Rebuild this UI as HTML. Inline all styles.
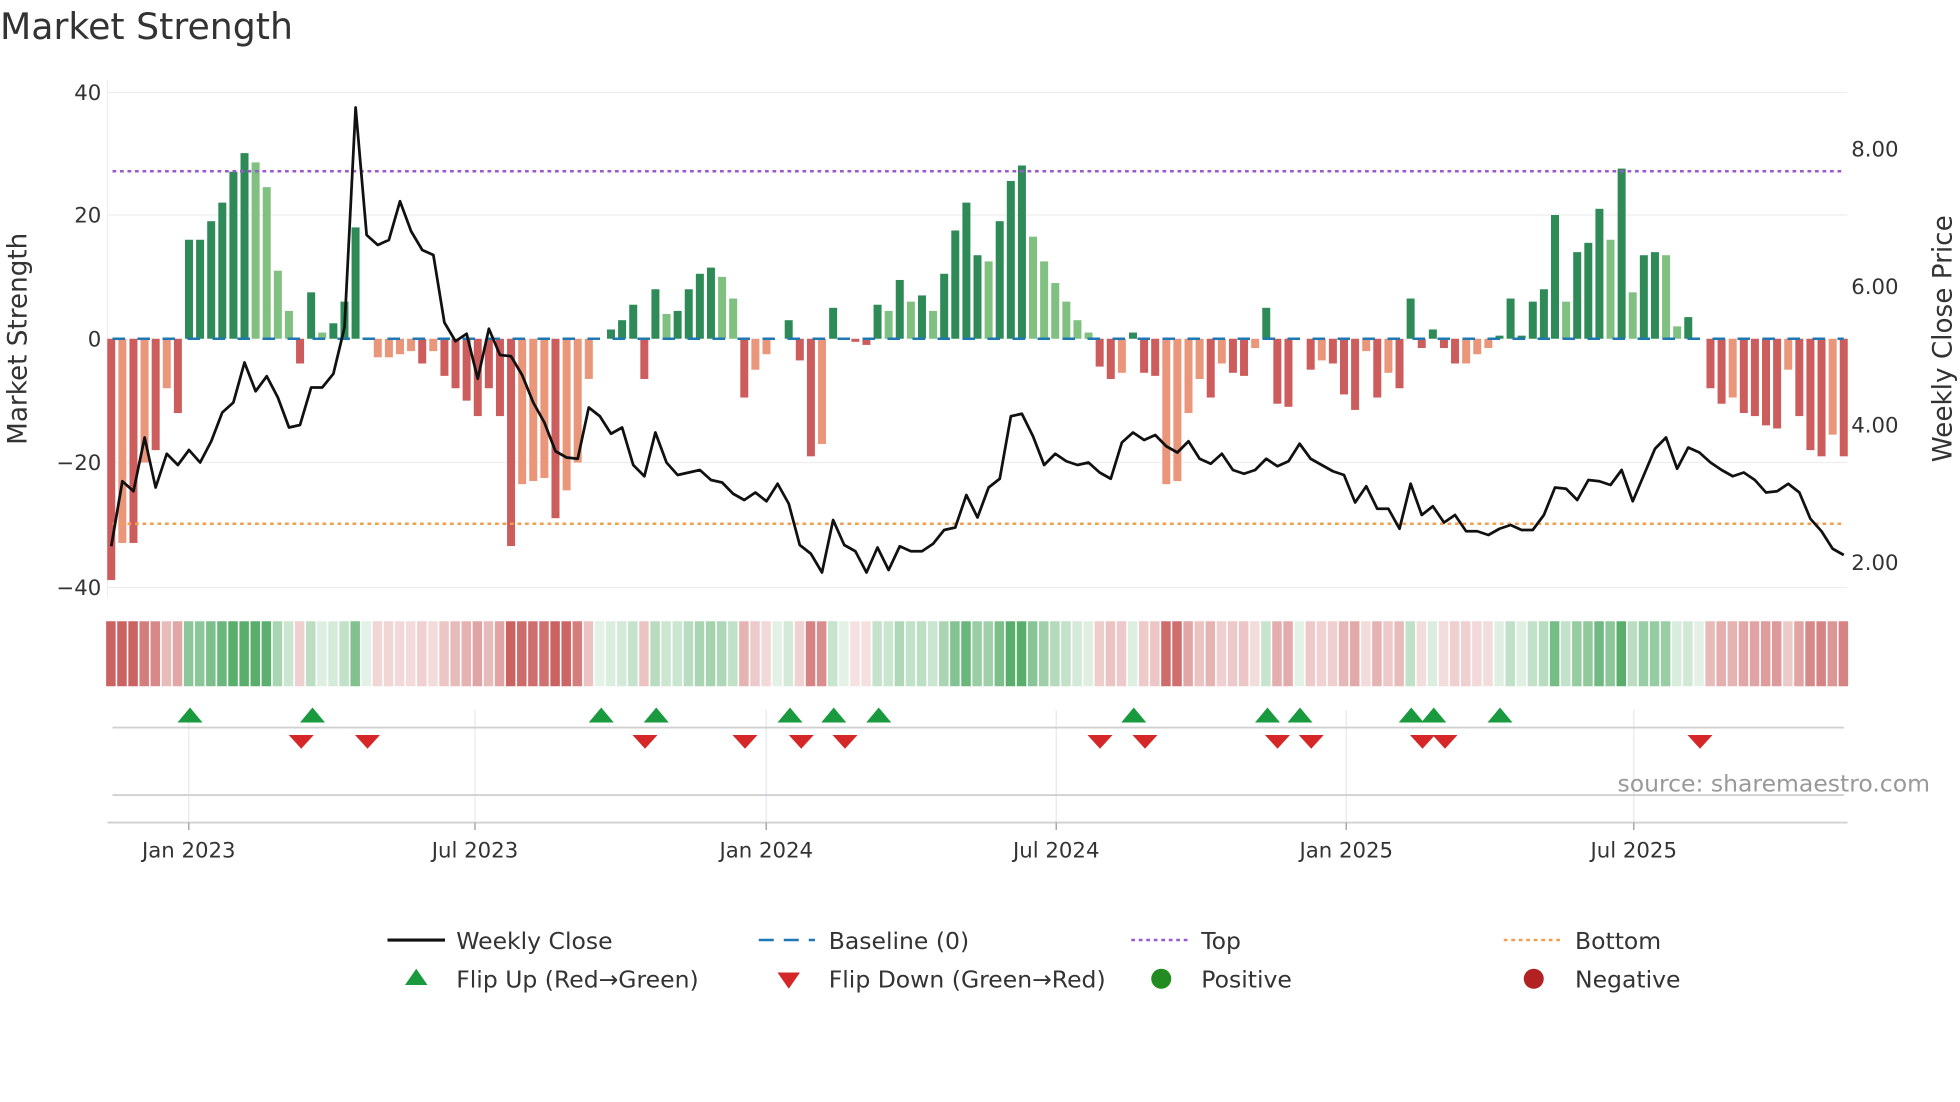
<!DOCTYPE html>
<html><head><meta charset="utf-8"><style>
html,body{margin:0;padding:0;background:#fff;width:1960px;height:1102px;overflow:hidden}
svg{display:block}
text{font-family:"DejaVu Sans","Liberation Sans",sans-serif;fill:#333}
</style></head><body>
<svg id="s" width="1960" height="1102" viewBox="0 0 1568 881.6" preserveAspectRatio="none" xmlns="http://www.w3.org/2000/svg">
<text x="0" y="31" font-size="29" fill="#333">Market Strength</text>
<g stroke="#eeeeee" stroke-width="1">
<line x1="86" y1="74" x2="1478" y2="74"/><line x1="86" y1="172" x2="1478" y2="172"/>
<line x1="86" y1="370" x2="1478" y2="370"/><line x1="86" y1="470" x2="1478" y2="470"/>
</g>
<line x1="86" y1="64" x2="86" y2="478" stroke="#eee"/>
<g font-size="17" text-anchor="end">
<text x="81" y="80">40</text><text x="81" y="178">20</text><text x="81" y="277">0</text>
<text x="81" y="376">−20</text><text x="81" y="476">−40</text>
</g>
<g font-size="17">
<text x="1481" y="125">8.00</text><text x="1481" y="235">6.00</text>
<text x="1481" y="346">4.00</text><text x="1481" y="456">2.00</text>
</g>
<text transform="translate(21,271) rotate(-90)" font-size="21" text-anchor="middle">Market Strength</text>
<text transform="translate(1561,271) rotate(-90)" font-size="21" text-anchor="middle">Weekly Close Price</text>
<g id="bars"></g>
<line x1="90" y1="271" x2="1475" y2="271" stroke="#1f77b4" stroke-width="2" stroke-dasharray="10,10"/>
<line x1="90" y1="137" x2="1475" y2="137" stroke="#9b59d0" stroke-width="2" stroke-dasharray="3,3"/>
<line x1="90" y1="419" x2="1475" y2="419" stroke="#f0a050" stroke-width="2" stroke-dasharray="3,3"/>
<polyline id="price" fill="none" stroke="#111" stroke-width="2.2" stroke-linejoin="round"/>
<g id="strip"></g>
<g stroke="#e6e9ef" stroke-width="1">
<line x1="151" y1="568" x2="151" y2="658"/><line x1="380" y1="568" x2="380" y2="658"/>
<line x1="613" y1="568" x2="613" y2="658"/><line x1="845" y1="568" x2="845" y2="658"/>
<line x1="1077" y1="568" x2="1077" y2="658"/><line x1="1307" y1="568" x2="1307" y2="658"/>
</g>
<line x1="90" y1="582" x2="1475" y2="582" stroke="#d0d0d0" stroke-width="1.5"/>
<line x1="90" y1="636" x2="1475" y2="636" stroke="#d0d0d0" stroke-width="1.5"/>
<line x1="86" y1="658" x2="1478" y2="658" stroke="#d0d0d0" stroke-width="1.5"/>
<g stroke="#aaa" stroke-width="1.2">
<line x1="151" y1="658" x2="151" y2="664"/><line x1="380" y1="658" x2="380" y2="664"/>
<line x1="613" y1="658" x2="613" y2="664"/><line x1="845" y1="658" x2="845" y2="664"/>
<line x1="1077" y1="658" x2="1077" y2="664"/><line x1="1307" y1="658" x2="1307" y2="664"/>
</g>
<g id="tri"></g>
<text x="1544" y="633" font-size="18.8" text-anchor="end" style="fill:#999">source: sharemaestro.com</text>
<g font-size="17" text-anchor="middle">
<text x="151" y="686">Jan 2023</text><text x="380" y="686">Jul 2023</text>
<text x="613" y="686">Jan 2024</text><text x="845" y="686">Jul 2024</text>
<text x="1077" y="686">Jan 2025</text><text x="1307" y="686">Jul 2025</text>
</g>
<g font-size="18.8">
<line x1="310" y1="752" x2="356" y2="752" stroke="#111" stroke-width="2.5"/>
<text x="365" y="759">Weekly Close</text>
<line x1="607" y1="752" x2="652" y2="752" stroke="#1f77b4" stroke-width="2" stroke-dasharray="12,8"/>
<text x="663" y="759">Baseline (0)</text>
<line x1="905" y1="752" x2="950" y2="752" stroke="#9b59d0" stroke-width="2" stroke-dasharray="3,3"/>
<text x="961" y="759">Top</text>
<line x1="1203" y1="752" x2="1248" y2="752" stroke="#f0a050" stroke-width="2" stroke-dasharray="3,3"/>
<text x="1260" y="759">Bottom</text>
<polygon points="324,788 342,788 333,775" fill="#1a9a3f"/>
<text x="365" y="790">Flip Up (Red→Green)</text>
<polygon points="622,778 640,778 631,791" fill="#d62728"/>
<text x="663" y="790">Flip Down (Green→Red)</text>
<circle cx="929" cy="783" r="8" fill="#228b22"/>
<text x="961" y="790">Positive</text>
<circle cx="1227" cy="783" r="8" fill="#b22222"/>
<text x="1260" y="790">Negative</text>
</g>
</svg>
<script>
var vals=[[-39,'r'],[-33,'s'],[-33,'r'],[-20,'s'],[-18,'r'],[-8,'s'],[-12,'r'],[16,'g'],[16,'g'],[19,'g'],[22,'g'],[27,'g'],[30,'g'],[28.5,'l'],[24.5,'l'],[11,'l'],[4.5,'l'],[-4,'r'],[7.5,'g'],[1,'l'],[2.5,'g'],[6,'g'],[18,'g'],[0,'g'],[-3,'s'],[-3,'s'],[-2.5,'s'],[-2,'s'],[-4,'r'],[-2,'s'],[-6,'r'],[-8,'r'],[-10,'r'],[-12.5,'r'],[-8,'r'],[-12.5,'r'],[-33.5,'r'],[-23.5,'s'],[-23,'s'],[-22.5,'s'],[-29,'r'],[-24.5,'s'],[-20,'s'],[-6.5,'s'],[0,'g'],[1.5,'g'],[3,'g'],[5.5,'g'],[-6.5,'r'],[8,'g'],[4,'l'],[4.5,'g'],[8,'g'],[10.5,'g'],[11.5,'g'],[10,'l'],[6.5,'l'],[-9.5,'r'],[-5,'s'],[-2.5,'s'],[0,'g'],[3,'g'],[-3.5,'r'],[-19,'r'],[-17,'s'],[5,'g'],[0,'g'],[-0.5,'r'],[-1,'r'],[5.5,'g'],[4.5,'l'],[9.5,'g'],[6,'l'],[7,'g'],[4.5,'l'],[10.5,'g'],[17.5,'g'],[22,'g'],[13.5,'g'],[12.5,'l'],[19,'g'],[25.5,'g'],[28,'g'],[16.5,'l'],[12.5,'l'],[9,'l'],[6,'l'],[3,'l'],[1,'l'],[-4.5,'r'],[-6.5,'r'],[-5.5,'s'],[1,'g'],[-5.5,'r'],[-6,'r'],[-23.5,'s'],[-23,'s'],[-12,'s'],[-6.5,'s'],[-9.5,'r'],[-4,'s'],[-5.5,'r'],[-6,'r'],[-1.5,'s'],[5,'g'],[-10.5,'r'],[-11,'r'],[0,'g'],[-5,'r'],[-3.5,'s'],[-4,'r'],[-9,'r'],[-11.5,'r'],[-2,'s'],[-9.5,'r'],[-5.5,'s'],[-8,'r'],[6.5,'g'],[-1.5,'r'],[1.5,'g'],[-1.5,'r'],[-4,'r'],[-4,'s'],[-2.5,'s'],[-1.5,'s'],[0.5,'g'],[6.5,'g'],[0.5,'g'],[6,'g'],[8,'g'],[20,'g'],[6,'l'],[14,'g'],[15.5,'g'],[21,'g'],[16,'l'],[27.5,'g'],[7.5,'l'],[13.5,'g'],[14,'g'],[13.5,'l'],[2,'l'],[3.5,'g'],[0,'g'],[-8,'r'],[-10.5,'r'],[-9.5,'s'],[-12,'r'],[-12.5,'r'],[-14,'r'],[-14.5,'r'],[-5,'s'],[-12.5,'r'],[-18,'r'],[-19,'r'],[-15.5,'s'],[-19,'r']];
var N=vals.length,x0=89,x1=1475,dx=(x1-x0)/(N-1),ns='http://www.w3.org/2000/svg';
var col={g:'#2e8b57',l:'#80c080',r:'#cd5c5c',s:'#e9967a'};
var B=document.getElementById('bars'),S=document.getElementById('strip');
function R(p,x,y,w,h,f){var e=document.createElementNS(ns,'rect');e.setAttribute('x',x);e.setAttribute('y',y);e.setAttribute('width',w);e.setAttribute('height',h);e.setAttribute('fill',f);p.appendChild(e);}
for(var i=0;i<N;i++){var v=vals[i][0],x=x0+i*dx,h=Math.abs(v)*4.95,y=v>=0?271-h:271;
 if(h>0.3)R(B,x-3.2,y,6.4,h,col[vals[i][1]]);
 var a=Math.min(0.95,0.16+Math.abs(v)/32);var c;
 if(v>0||(v==0&&vals[i][1]!='r')){c='rgba(80,170,100,'+a.toFixed(2)+')';}else{c='rgba(200,90,90,'+a.toFixed(2)+')';}
 R(S,x-4.1,497,7.6,52,c);}
var py=[437,385,393,350,390,363,372,360,370,353,330,322,290,313,301,318,342,340,310,310,299,262,86,188,196,192,161,185,200,204,258,273,267,303,263,284,285,300,322,338,361,366,367,326,333,347,342,372,381,346,370,380,378,376,384,386,395,400,394,401,387,403,436,443,458,416,436,441,458,438,456,437,441,441,435,424,422,396,414,390,383,333,331,349,372,363,369,372,370,378,383,354,346,352,348,357,362,353,367,371,363,376,379,376,367,373,369,355,367,372,377,380,402,389,407,407,423,387,412,405,418,412,425,425,428,423,420,424,424,412,390,391,400,384,385,388,376,401,380,359,350,375,358,362,370,376,381,378,384,394,393,387,394,415,425,439,444];
var M=py.length,pts=[];for(var j=0;j<M;j++)pts.push((x0+j*(x1-x0)/(M-1)).toFixed(1)+','+py[j]);
document.getElementById('price').setAttribute('points',pts.join(' '));
var T=document.getElementById('tri');
[152,250,481,525,632,667,703,907,1014,1040,1129,1147,1200].forEach(function(x){var p=document.createElementNS(ns,'polygon');p.setAttribute('points',(x-10)+',578 '+(x+10)+',578 '+x+',566');p.setAttribute('fill','#1a9a3f');T.appendChild(p);});
[241,294,516,596,641,676,880,916,1022,1049,1138,1156,1360].forEach(function(x){var p=document.createElementNS(ns,'polygon');p.setAttribute('points',(x-10)+',588 '+(x+10)+',588 '+x+',599');p.setAttribute('fill','#d62728');T.appendChild(p);});
</script>
</body></html>
